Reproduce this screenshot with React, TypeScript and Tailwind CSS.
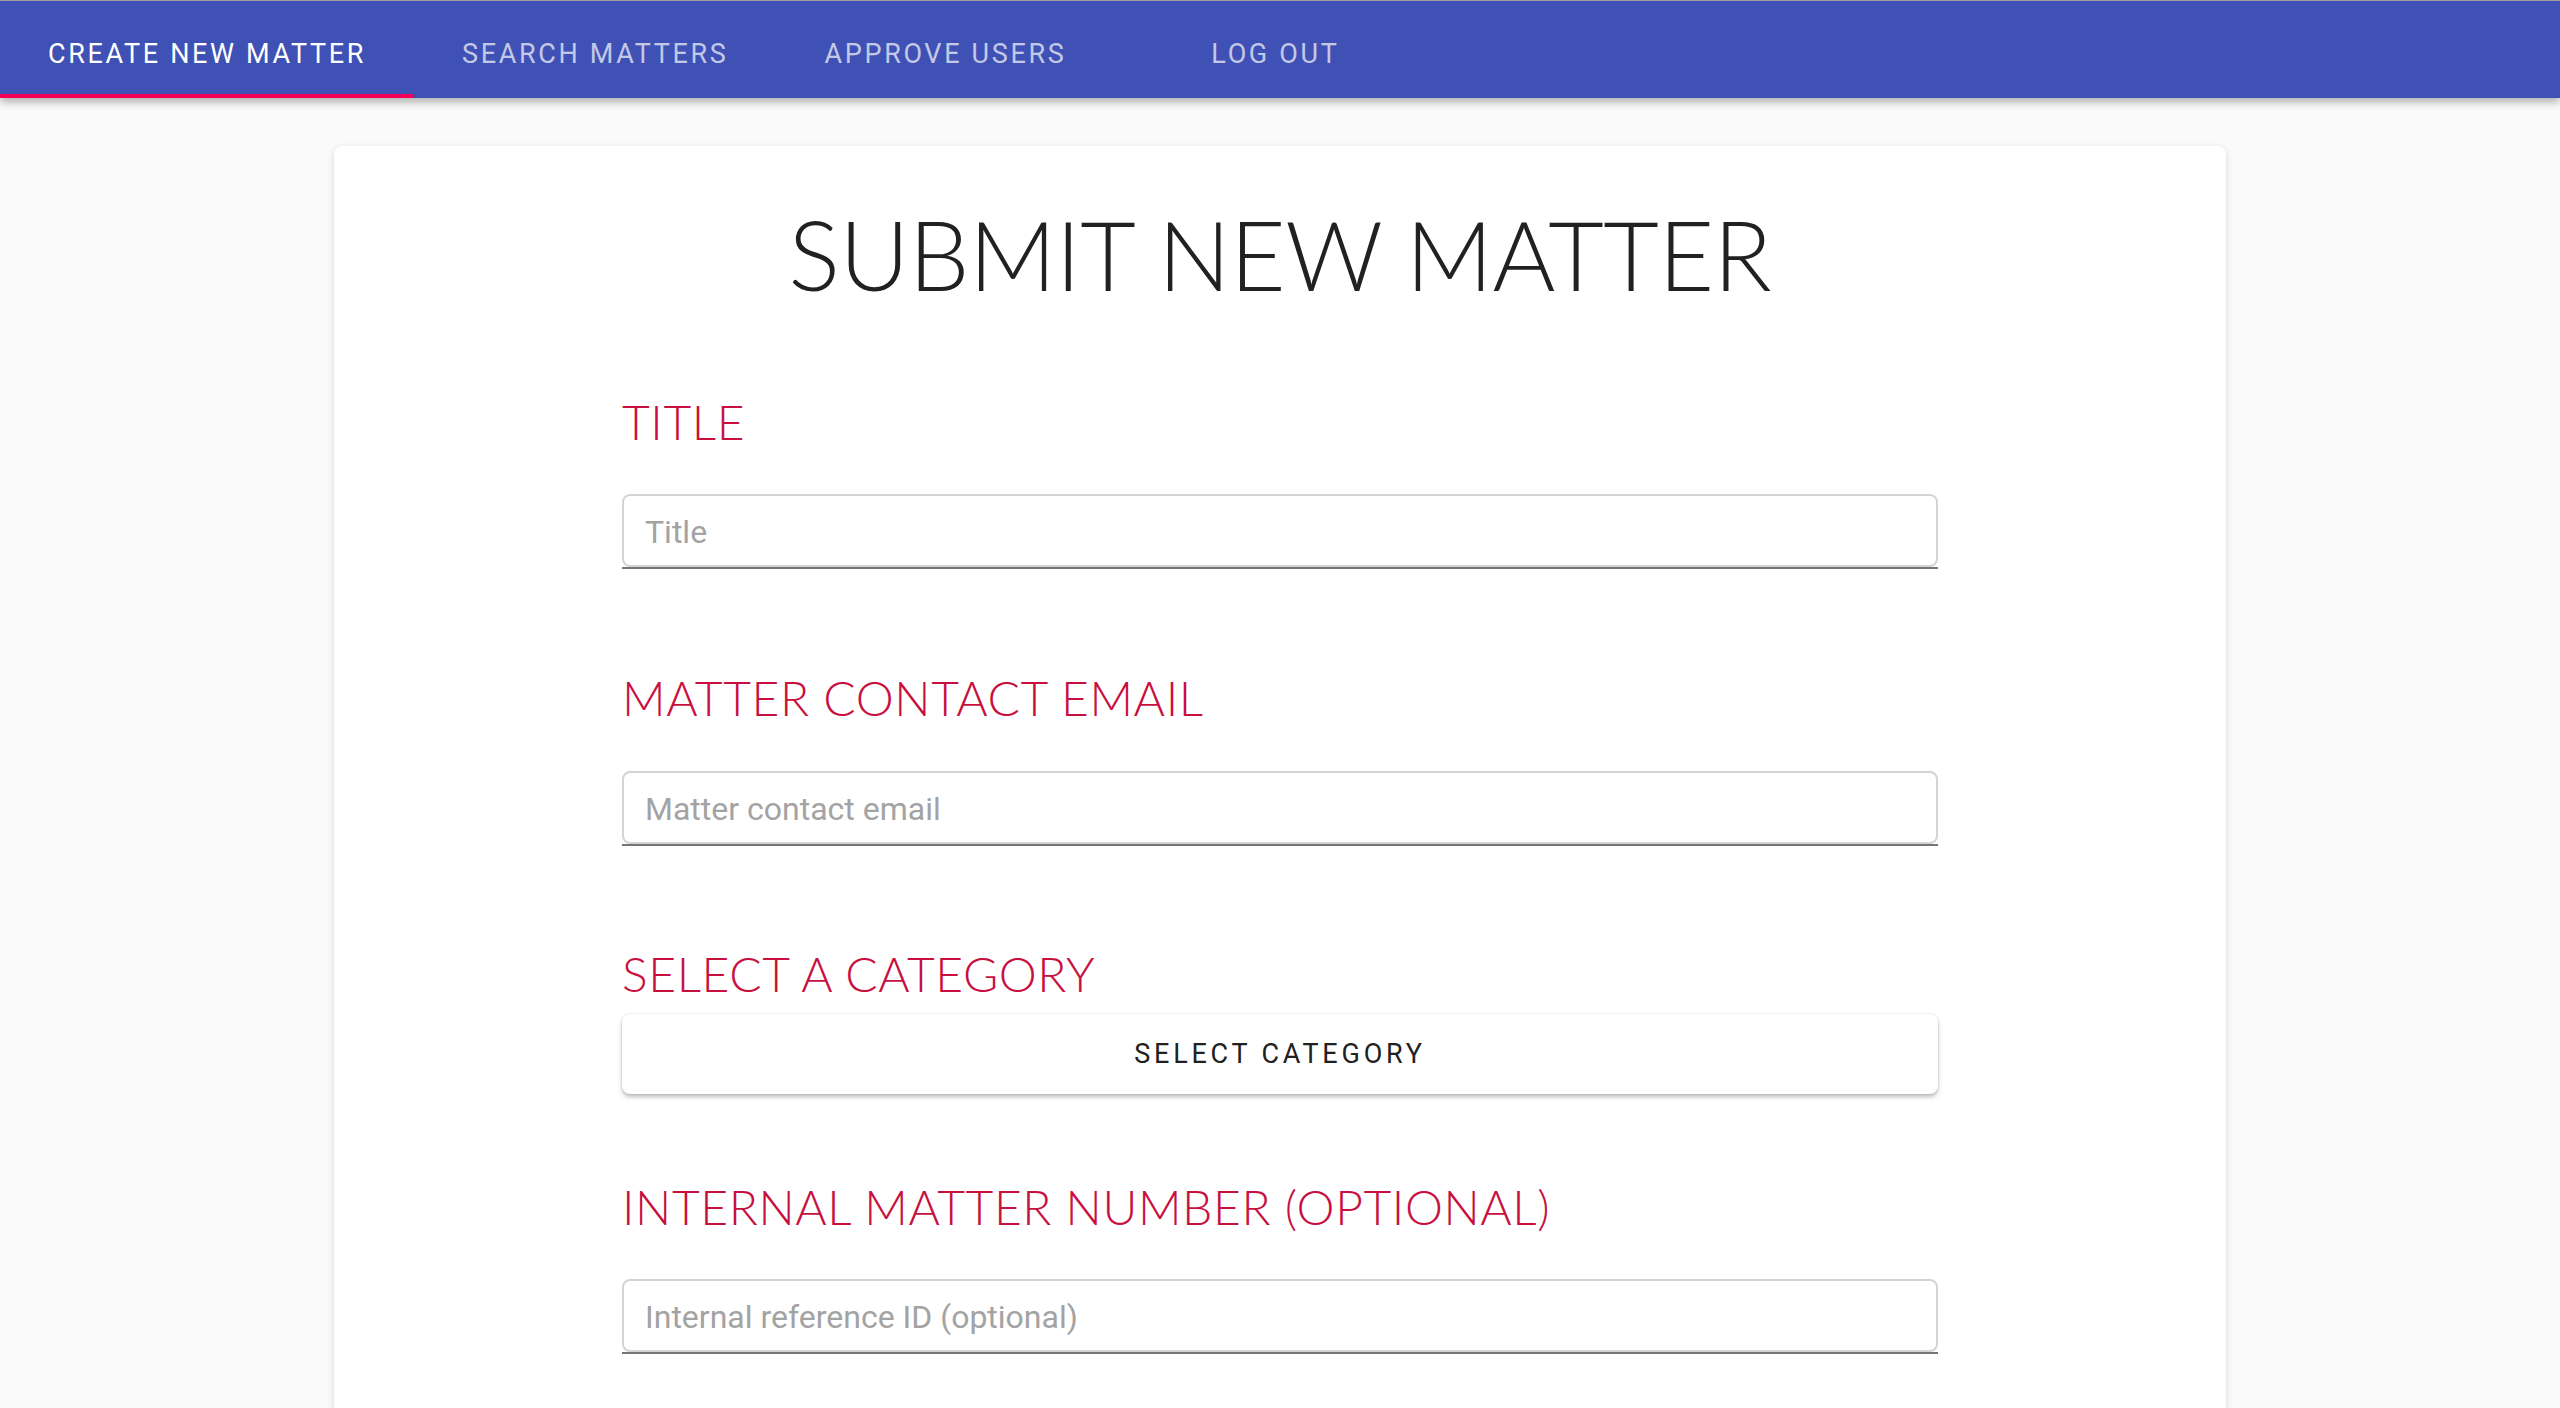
import { useState } from "react";

const tabs = ["Create New Matter", "Search Matters", "Approve Users", "Log Out"];

const Field = ({ placeholder }: { placeholder: string }) => (
  <div className="border-b-2 border-[#757575]">
    <input
      type="text"
      placeholder={placeholder}
      className="block w-full h-[73px] rounded-lg border-2 border-[#d4d4d4] bg-white px-[21px] pt-[2px] text-[32px] text-[#333] placeholder:text-[#a3a3a3] font-['Roboto',sans-serif] outline-none"
    />
  </div>
);

const Label = ({ children }: { children: string }) => (
  <h2 className="font-['Lato',sans-serif] font-light text-[48px] leading-none uppercase text-[#c8103f] tracking-[0.012em]">
    {children}
  </h2>
);

const App = () => {
  const [active, setActive] = useState(0);

  return (
    <div className="h-[1408px] overflow-hidden bg-[#fafafa]">
      {/* app bar */}
      <header className="relative z-10 h-[98px] border-t border-[#9e9e9e] bg-[#3f51b5] shadow-[0_4px_8px_rgba(0,0,0,0.3)]">
        <nav className="flex h-full">
          {tabs.map((t, i) => (
            <button
              key={t}
              type="button"
              onClick={() => setActive(i)}
              className={[
                "relative min-w-[322px] px-[48px] pt-[9px] h-full uppercase font-['Roboto',sans-serif] text-[27px] tracking-[2.65px]",
                active === i ? "text-white" : "text-white/70",
              ].join(" ")}
            >
              {t}
              {active === i && (
                <span className="absolute left-0 right-0 bottom-0 h-[4px] bg-[#f50057]" />
              )}
            </button>
          ))}
        </nav>
      </header>

      {/* form card */}
      <main className="mx-auto mt-[48px] w-[1892px] min-h-[1300px] rounded-lg bg-white pt-[60px] shadow-[0_2px_6px_rgba(0,0,0,0.15)]">
        <h1 className="text-center font-['Lato',sans-serif] font-light text-[96px] leading-none tracking-[-0.005em] text-[#212121]">
          SUBMIT NEW MATTER
        </h1>

        <form className="mx-auto w-[1316px]">
          <div className="mt-[96px]">
            <Label>Title</Label>
            <div className="mt-[48px]">
              <Field placeholder="Title" />
            </div>
          </div>

          <div className="mt-[105px]">
            <Label>Matter contact email</Label>
            <div className="mt-[49px]">
              <Field placeholder="Matter contact email" />
            </div>
          </div>

          <div className="mt-[104px]">
            <Label>Select a category</Label>
            <button
              type="button"
              className="mt-[16px] block w-full h-[80px] rounded-lg bg-white shadow-[0_3px_4px_rgba(0,0,0,0.25),0_0_2px_rgba(0,0,0,0.12)] uppercase font-['Roboto',sans-serif] text-[27px] tracking-[0.14em] text-[#212121]"
            >
              Select category
            </button>
          </div>

          <div className="mt-[89px]">
            <Label>Internal matter number (optional)</Label>
            <div className="mt-[48px]">
              <Field placeholder="Internal reference ID (optional)" />
            </div>
          </div>
        </form>
      </main>
    </div>
  );
};

export default App;
